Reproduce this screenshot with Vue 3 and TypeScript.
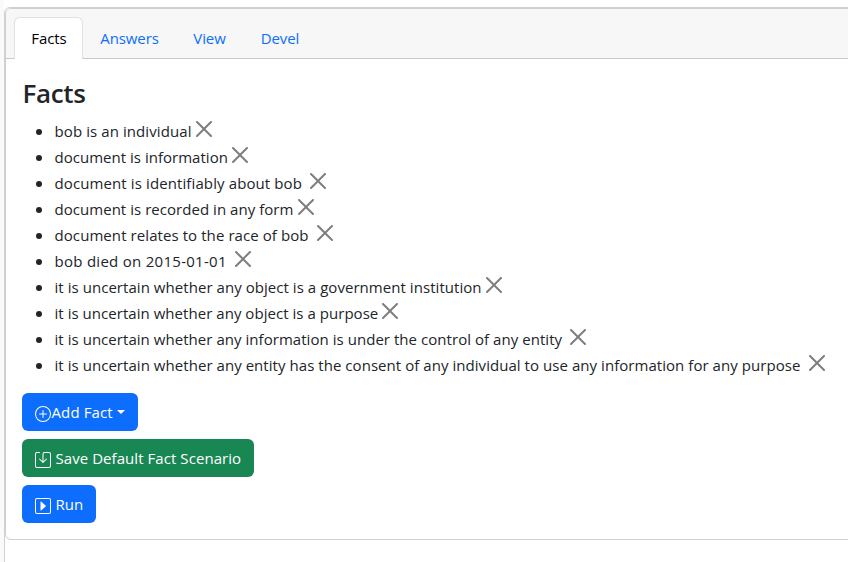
<script setup lang="ts">
interface Tab {
  label: string
  width: number
}

interface Fact {
  text: string
  width: number
  tracking: number
}

const activeTab = 'Facts'

const tabs: Tab[] = [
  { label: 'Facts', width: 69 },
  { label: 'Answers', width: 92 },
  { label: 'View', width: 68 },
  { label: 'Devel', width: 73 },
]

const facts: Fact[] = [
  { text: 'bob is an individual', width: 137.5, tracking: 0.09 },
  { text: 'document is information', width: 173.5, tracking: 0.02 },
  { text: 'document is identifiably about bob', width: 251.5, tracking: 0.11 },
  { text: 'document is recorded in any form', width: 239.5, tracking: 0.04 },
  { text: 'document relates to the race of bob', width: 258.5, tracking: 0.08 },
  { text: 'bob died on 2015-01-01', width: 176.5, tracking: 0.28 },
  {
    text: 'it is uncertain whether any object is a government institution',
    width: 427.5,
    tracking: 0.05,
  },
  { text: 'it is uncertain whether any object is a purpose', width: 323.5, tracking: 0.04 },
  {
    text: 'it is uncertain whether any information is under the control of any entity',
    width: 511.5,
    tracking: 0.045,
  },
  {
    text: 'it is uncertain whether any entity has the consent of any individual to use any information for any purpose',
    width: 750.5,
    tracking: 0.05,
  },
]
</script>

<template>
  <div class="page">
    <main class="pane">
      <section class="card">
        <nav class="card-header">
          <a
            v-for="tab in tabs"
            :key="tab.label"
            class="tab"
            :class="{ active: tab.label === activeTab }"
            :style="{ width: tab.width + 'px' }"
            >{{ tab.label }}</a
          >
        </nav>
        <div class="card-body">
          <h3 class="title">Facts</h3>
          <ul class="facts">
            <li v-for="fact in facts" :key="fact.text" class="fact">
              <span
                class="fact-text"
                :style="{ width: fact.width + 'px', letterSpacing: fact.tracking + 'px' }"
                >{{ fact.text }}</span
              >
              <button class="close" aria-label="Remove">
                <svg viewBox="0 0 16 16" width="16" height="16">
                  <path
                    d="M.293.293a1 1 0 0 1 1.414 0L8 6.586 14.293.293a1 1 0 1 1 1.414 1.414L9.414 8l6.293 6.293a1 1 0 0 1-1.414 1.414L8 9.414l-6.293 6.293a1 1 0 0 1-1.414-1.414L6.586 8 .293 1.707a1 1 0 0 1 0-1.414z"
                  />
                </svg>
              </button>
            </li>
          </ul>
          <div class="actions">
            <button class="btn primary add">
              <svg class="icon" viewBox="0 0 16 16">
                <path d="M8 15A7 7 0 1 1 8 1a7 7 0 0 1 0 14zm0 1A8 8 0 1 0 8 0a8 8 0 0 0 0 16z" />
                <path
                  d="M8 4a.5.5 0 0 1 .5.5v3h3a.5.5 0 0 1 0 1h-3v3a.5.5 0 0 1-1 0v-3h-3a.5.5 0 0 1 0-1h3v-3A.5.5 0 0 1 8 4z"
                />
              </svg>
              <span class="label">Add Fact</span>
              <span class="caret"></span>
            </button>
            <button class="btn success save">
              <svg class="icon" viewBox="0 0 16 16">
                <path
                  d="M2 1a1 1 0 0 0-1 1v12a1 1 0 0 0 1 1h12a1 1 0 0 0 1-1V2a1 1 0 0 0-1-1H9.5a1 1 0 0 0-1 1v7.293l2.646-2.647a.5.5 0 0 1 .708.708l-3.5 3.5a.5.5 0 0 1-.708 0l-3.5-3.5a.5.5 0 1 1 .708-.708L7.5 9.293V2a2 2 0 0 1 2-2H14a2 2 0 0 1 2 2v12a2 2 0 0 1-2 2H2a2 2 0 0 1-2-2V2a2 2 0 0 1 2-2h2.5a.5.5 0 0 1 0 1H2z"
                />
              </svg>
              <span class="label">Save Default Fact Scenario</span>
            </button>
            <button class="btn primary run">
              <svg class="icon" viewBox="0 0 16 16">
                <path
                  d="M14 1a1 1 0 0 1 1 1v12a1 1 0 0 1-1 1H2a1 1 0 0 1-1-1V2a1 1 0 0 1 1-1h12zM2 0a2 2 0 0 0-2 2v12a2 2 0 0 0 2 2h12a2 2 0 0 0 2-2V2a2 2 0 0 0-2-2H2z"
                />
                <path
                  d="M5.795 12.456A.5.5 0 0 1 5.5 12V4a.5.5 0 0 1 .832-.374l4.5 4a.5.5 0 0 1 0 .748l-4.5 4a.5.5 0 0 1-.537.082z"
                />
              </svg>
              <span class="label">Run</span>
            </button>
          </div>
        </div>
      </section>
    </main>
  </div>
</template>

<style>
body {
  margin: 0;
  background: #fff;
  overflow: hidden;
}
</style>

<style scoped>
.page {
  box-sizing: border-box;
  width: 848px;
  height: 562px;
  padding: 7px 0 0 4px;
  overflow: hidden;
  background: linear-gradient(to right, #fafafa 4px, #fff 4px);
  font-family: 'Segoe UI', 'Open Sans', 'Noto Sans', sans-serif;
  font-size: 15px;
  line-height: 24px;
  color: #212529;
}

.pane {
  box-sizing: border-box;
  width: 860px;
  height: 570px;
  border: 1px solid #d0d0d0;
  border-radius: 6px 0 0 0;
  background: #fff;
}

.card {
  box-sizing: border-box;
  height: 532px;
  border: 1px solid #d0d0d0;
  border-radius: 6px;
  overflow: hidden;
}

.card-header {
  box-sizing: border-box;
  display: flex;
  height: 50px;
  padding: 8px 8px 0;
  background: #f7f7f7;
  border-bottom: 1px solid #c9c9c9;
}

.tab {
  box-sizing: border-box;
  flex: none;
  height: 42px;
  padding: 8px 0 0 1px;
  border: 1px solid transparent;
  border-bottom: 0;
  border-radius: 6px 6px 0 0;
  text-align: center;
  white-space: nowrap;
  letter-spacing: -0.1px;
  color: #0d6efd;
}

.tab.active {
  background: #fff;
  border-color: #dee2e6;
  color: #000;
}

.card-body {
  padding: 17px 16px 16px;
}

.title {
  margin: 0 0 8px;
  padding-left: 0.5px;
  font-size: 26px;
  line-height: 34px;
  font-weight: 600;
  letter-spacing: -0.35px;
}

.facts {
  margin: 0 0 15px;
  padding: 0 0 0 32.5px;
}

.fact {
  height: 26px;
  display: flex;
  align-items: flex-start;
}

.fact::before {
  content: '';
  flex: none;
  width: 6px;
  height: 6px;
  margin: 11px 13px 0 -19px;
  border-radius: 50%;
  background: #212529;
}

.fact-text {
  flex: none;
  padding-top: 1px;
  white-space: nowrap;
}

.close {
  flex: none;
  display: flex;
  padding: 4px;
  margin-top: -1px;
  border: 0;
  background: none;
  opacity: 0.5;
}

.actions {
  display: flex;
  flex-direction: column;
  align-items: flex-start;
  gap: 8px;
}

.btn {
  box-sizing: border-box;
  display: flex;
  align-items: center;
  height: 38px;
  padding: 0 13px;
  border: 0;
  border-radius: 6px;
  font: inherit;
  color: #fff;
  white-space: nowrap;
}

.primary {
  background: #0d6efd;
}

.success {
  background: #198754;
}

.add {
  width: 116px;
}

.save {
  width: 232px;
}

.run {
  width: 74px;
}

.icon {
  flex: none;
  width: 16px;
  height: 16px;
  margin-top: 4px;
  fill: currentColor;
}

.add .label {
  margin-left: 0.5px;
  letter-spacing: 0.12px;
}

.save .label,
.run .label {
  margin-left: 4.5px;
  letter-spacing: 0.06px;
}

.caret {
  margin-left: 4px;
  border-top: 4.8px solid;
  border-right: 4.8px solid transparent;
  border-left: 4.8px solid transparent;
}
</style>
